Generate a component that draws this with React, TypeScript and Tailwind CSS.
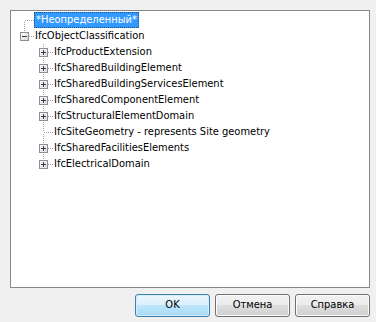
import React from "react";

type Box = "plus" | "minus" | null;

type Row = {
  label: string;
  level: number;
  up: boolean;
  down: boolean;
  box: Box;
  selected?: boolean;
};

const children = [
  { label: "IfcProductExtension", box: "plus" as Box },
  { label: "IfcSharedBuildingElement", box: "plus" as Box },
  { label: "IfcSharedBuildingServicesElement", box: "plus" as Box },
  { label: "IfcSharedComponentElement", box: "plus" as Box },
  { label: "IfcStructuralElementDomain", box: "plus" as Box },
  { label: "IfcSiteGeometry - represents Site geometry", box: null },
  { label: "IfcSharedFacilitiesElements", box: "plus" as Box },
  { label: "IfcElectricalDomain", box: "plus" as Box },
];

const rows: Row[] = [
  { label: "*Неопределенный*", level: 0, up: false, down: true, box: null, selected: true },
  { label: "IfcObjectClassification", level: 0, up: true, down: false, box: "minus" },
  ...children.map((c, idx) => ({
    label: c.label,
    level: 1,
    up: true,
    down: idx < children.length - 1,
    box: c.box,
  })),
];

// tree connector for one row: dotted lines plus optional expander box
const Connector = ({ up, down, box }: { up: boolean; down: boolean; box: Box }) => {
  const line = "#a0a0a0";
  return (
    <svg width="19" height="16" viewBox="0 0 19 16" className="shrink-0 block">
      {up && (
        <line x1="9.5" y1="0" x2="9.5" y2={box ? 4 : 8} stroke={line} strokeDasharray="1 1" />
      )}
      {down && (
        <line x1="9.5" y1={box ? 14 : 10} x2="9.5" y2="16" stroke={line} strokeDasharray="1 1" />
      )}
      <line x1={box ? 14 : 10} y1="8.5" x2="19" y2="8.5" stroke={line} strokeDasharray="1 1" />
      {box && (
        <>
          <defs>
            <linearGradient id="exp" x1="0" y1="0" x2="1" y2="1">
              <stop offset="0" stopColor="#ffffff" />
              <stop offset="1" stopColor="#d8d8d8" />
            </linearGradient>
          </defs>
          <rect x="5.5" y="4.5" width="8" height="8" fill="url(#exp)" stroke="#8f8f8f" />
          <line x1="7" y1="8.5" x2="12" y2="8.5" stroke="#2c3e55" />
          {box === "plus" && <line x1="9.5" y1="6" x2="9.5" y2="11" stroke="#2c3e55" />}
        </>
      )}
    </svg>
  );
};

const TreeRow = ({ row }: { row: Row }) => (
  <div className="flex h-4 items-stretch">
    {row.level === 1 && <div className="w-[19px] shrink-0" />}
    <Connector up={row.up} down={row.down} box={row.box} />
    <span
      className={
        row.selected
          ? "h-4 whitespace-nowrap border border-dotted border-[#1c4f87] bg-[#3399ff] px-px leading-[14px] text-white"
          : "h-4 whitespace-nowrap border border-transparent leading-[14px] text-black"
      }
    >
      {row.label}
    </span>
  </div>
);

const DlgButton = ({ label, isDefault }: { label: string; isDefault?: boolean }) => (
  <button
    className={
      isDefault
        ? "h-[23px] w-[75px] rounded-[3px] border border-[#3c7fb1] bg-[linear-gradient(to_bottom,#eaf6fd_0%,#d9f0fc_50%,#bee6fd_50%,#a7d9f5_100%)] text-[11px] text-black shadow-[inset_0_0_0_1px_#d4eefc]"
        : "h-[23px] w-[75px] rounded-[3px] border border-[#707070] bg-[linear-gradient(to_bottom,#f2f2f2_0%,#ebebeb_50%,#dddddd_50%,#cfcfcf_100%)] text-[11px] text-black shadow-[inset_0_0_0_1px_#fcfcfc]"
    }
  >
    {label}
  </button>
);

export default function App() {
  return (
    <div className="flex h-[322px] w-[376px] flex-col bg-[#f0f0f0] pl-[10px] pr-[6px] pt-[10px] font-['DejaVu_Sans_Condensed','DejaVu_Sans',sans-serif] text-[11px]">
      <div className="h-[278px] w-[360px] border border-[#828790] bg-white pl-[4px] pt-px">
        {rows.map((row, idx) => (
          <TreeRow key={idx} row={row} />
        ))}
      </div>
      <div className="mt-[6px] flex justify-end gap-[5px]">
        <DlgButton label="OK" isDefault />
        <DlgButton label="Отмена" />
        <DlgButton label="Справка" />
      </div>
    </div>
  );
}
